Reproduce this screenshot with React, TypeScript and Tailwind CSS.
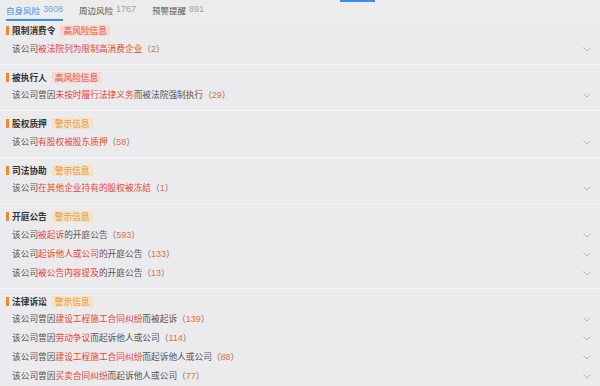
import React from 'react';

type Part = { text: string; red?: boolean };
type Row = { parts: Part[]; count: number };
type Section = { title: string; tag: 'high' | 'warn'; rows: Row[] };

const sections: Section[] = [
  {
    title: '限制消费令',
    tag: 'high',
    rows: [{ parts: [{ text: '该公司' }, { text: '被法院列为限制高消费企业', red: true }], count: 2 }],
  },
  {
    title: '被执行人',
    tag: 'high',
    rows: [
      {
        parts: [{ text: '该公司曾因' }, { text: '未按时履行法律义务', red: true }, { text: '而被法院强制执行' }],
        count: 29,
      },
    ],
  },
  {
    title: '股权质押',
    tag: 'warn',
    rows: [{ parts: [{ text: '该公司' }, { text: '有股权被股东质押', red: true }], count: 58 }],
  },
  {
    title: '司法协助',
    tag: 'warn',
    rows: [{ parts: [{ text: '该公司' }, { text: '在其他企业持有的股权被冻结', red: true }], count: 1 }],
  },
  {
    title: '开庭公告',
    tag: 'warn',
    rows: [
      { parts: [{ text: '该公司' }, { text: '被起诉', red: true }, { text: '的开庭公告' }], count: 593 },
      { parts: [{ text: '该公司' }, { text: '起诉他人或公司', red: true }, { text: '的开庭公告' }], count: 133 },
      { parts: [{ text: '该公司' }, { text: '被公告内容提及', red: true }, { text: '的开庭公告' }], count: 13 },
    ],
  },
  {
    title: '法律诉讼',
    tag: 'warn',
    rows: [
      {
        parts: [{ text: '该公司曾因' }, { text: '建设工程施工合同纠纷', red: true }, { text: '而被起诉' }],
        count: 139,
      },
      {
        parts: [{ text: '该公司曾因' }, { text: '劳动争议', red: true }, { text: '而起诉他人或公司' }],
        count: 114,
      },
      {
        parts: [{ text: '该公司曾因' }, { text: '建设工程施工合同纠纷', red: true }, { text: '而起诉他人或公司' }],
        count: 88,
      },
      {
        parts: [{ text: '该公司曾因' }, { text: '买卖合同纠纷', red: true }, { text: '而起诉他人或公司' }],
        count: 77,
      },
    ],
  },
];

const tabs = [
  { label: '自身风险', num: '3608', active: true },
  { label: '周边风险', num: '1767' },
  { label: '预警提醒', num: '891' },
];

const Chevron = () => (
  <svg width="8" height="5" viewBox="0 0 8 5" fill="none" className="shrink-0">
    <path d="M0.5 0.5 L4 4 L7.5 0.5" stroke="#b5b5b5" strokeWidth="1" />
  </svg>
);

const App: React.FC = () => {
  return (
    <div
      className="w-[600px] h-[386px] overflow-hidden bg-[#ebeaec] text-[8.7px]"
      style={{ fontFamily: '"Noto Sans CJK SC", "Noto Sans", sans-serif' }}
    >
      {/* Tabs */}
      <div className="relative h-[22px] flex items-stretch gap-4 pl-[6px] border-b border-[#f2f2f2] bg-[#ececec]">
        <div className="absolute left-[340px] top-0 w-[35px] h-[2px] bg-[#3a8ee6]" />
        {tabs.map((t) => (
          <div
            key={t.label}
            className={
              t.active
                ? 'flex items-center gap-[3px] border-b-2 border-[#3a8ee6] pt-[1px]'
                : 'flex items-center gap-[3px] border-b-2 border-transparent pt-[1px]'
            }
          >
            <span className={t.active ? 'text-[8.5px] text-[#3a8ee6]' : 'text-[8.5px] text-[#555]'}>{t.label}</span>
            <span
              className={t.active ? 'text-[9px] text-[#6aa8e8]' : 'text-[9px] text-[#a0a0a0]'}
              style={{ fontFamily: '"Liberation Sans", sans-serif' }}
            >
              {t.num}
            </span>
          </div>
        ))}
      </div>

      {/* Sections */}
      {sections.map((s, i) => (
        <div key={s.title} className={i === 0 ? 'pb-[5px] border-b border-[#f4f4f5]' : 'pt-[4px] pb-[5px] border-b border-[#f4f4f5]'}>
          <div className="h-[17.5px] flex items-center pl-[6px]">
            <span className="w-[3px] h-[9px] bg-[#f0892b] mr-[3px]" />
            <span className="font-bold text-[#333]">{s.title}</span>
            <span
              className={
                s.tag === 'high'
                  ? 'ml-[5px] px-[3px] h-[11px] flex items-center bg-[#f7d9d3] text-[#e2503e]'
                  : 'ml-[5px] px-[3px] h-[11px] flex items-center bg-[#f5e2c6] text-[#e8953a]'
              }
            >
              {s.tag === 'high' ? '高风险信息' : '警示信息'}
            </span>
          </div>
          {s.rows.map((r, j) => (
            <div key={j} className="h-[19px] flex items-center justify-between pl-[12px] pr-[9px]">
              <span className="text-[#555]">
                {r.parts.map((p, k) => (
                  <span key={k} className={p.red ? 'text-[#e6443a]' : undefined}>
                    {p.text}
                  </span>
                ))}
                <span className="text-[#777]">（</span>
                <span className="text-[#e07334]" style={{ fontFamily: '"Liberation Sans", sans-serif', fontSize: '9px' }}>
                  {r.count}
                </span>
                <span className="text-[#777]">）</span>
              </span>
              <Chevron />
            </div>
          ))}
        </div>
      ))}
    </div>
  );
};

export default App;
